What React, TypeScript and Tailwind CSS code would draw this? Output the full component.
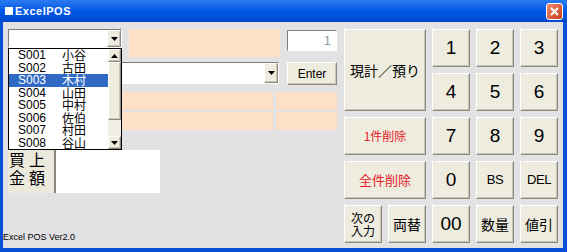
const btn =
  "flex items-center justify-center bg-[#eeecdf] border border-t-white border-l-white border-b-[#8c8a7e] border-r-[#8c8a7e] shadow-[inset_-1px_-1px_0_#c8c5b4]";

const jp = { fontFamily: '"Noto Sans CJK JP", "Liberation Sans", sans-serif' };
const sans = { fontFamily: '"Liberation Sans", "Noto Sans CJK JP", sans-serif' };

const ITEMS = [
  ["S001", "小谷"],
  ["S002", "古田"],
  ["S003", "木村"],
  ["S004", "山田"],
  ["S005", "中村"],
  ["S006", "佐伯"],
  ["S007", "村田"],
  ["S008", "谷山"],
];

function Arrow({ up = false }: { up?: boolean }) {
  return (
    <svg width="7" height="4" viewBox="0 0 7 4">
      <path d={up ? "M0 4 L3.5 0 L7 4 Z" : "M0 0 L7 0 L3.5 4 Z"} fill="#000" />
    </svg>
  );
}

function Combo({ className }: { className: string }) {
  return (
    <div
      className={`flex bg-white border border-t-[#7f7d72] border-l-[#7f7d72] border-b-white border-r-white ${className}`}
    >
      <div className="flex-1" />
      <div className={`${btn} w-[14px] border-t-[#f4f3ee] border-l-[#f4f3ee]`}>
        <Arrow />
      </div>
    </div>
  );
}

export default function App() {
  return (
    <div className="flex h-[252px] w-[567px] flex-col bg-[#0a4fd8]" style={sans}>
      {/* title bar */}
      <div className="flex h-[22px] items-center bg-gradient-to-b from-[#2a7af0] via-[#0058e6] to-[#0048d0] pl-[5px] pr-[4px]">
        <div className="h-[8px] w-[8px] bg-white" />
        <span className="ml-[2px] text-[11px] font-bold tracking-[0.5px] text-white">ExcelPOS</span>
        <div className="ml-auto flex h-[17px] w-[17px] items-center justify-center rounded-[3px] border border-white bg-gradient-to-br from-[#f08a6a] to-[#c83a14]">
          <svg width="9" height="9" viewBox="0 0 9 9">
            <path d="M1 1 L8 8 M8 1 L1 8" stroke="#fff" strokeWidth="2" />
          </svg>
        </div>
      </div>

      {/* client */}
      <div className="ml-[3px] mr-[4px] mb-[4px] flex flex-1 gap-[6px] bg-[#e2e1e4] pl-[5px] pt-[7px]">
        {/* left */}
        <div className="relative flex h-[214px] w-[330px] flex-col">
          <div className="flex h-[28px] items-start">
            <Combo className="h-[19px] w-[114px]" />
            <div className="ml-[7px] h-[28px] w-[151px] bg-[#fde0c6]" />
            <div className="ml-[7px] mt-[1px] flex h-[21px] w-[50px] items-center justify-end border border-t-[#808080] border-l-[#808080] border-b-white border-r-white bg-white pr-[5px] text-[13px] text-[#9a9a9a]">
              1
            </div>
          </div>
          <div className="mt-[5px] flex h-[23px] items-start">
            <Combo className="h-[22px] w-[271px]" />
            <div className={`${btn} ml-[8px] h-[23px] w-[50px] text-[12px] text-black`}>Enter</div>
          </div>
          <div className="mt-[7px] flex flex-col gap-[2px]">
            {[0, 1].map((r) => (
              <div key={r} className="flex h-[18px] gap-[3px]">
                <div className="w-[265px] bg-[#fde0c6]" />
                <div className="w-[61px] bg-[#fde0c6]" />
              </div>
            ))}
          </div>
          <div className="mt-[20px] flex h-[43px]">
            <div
              className="flex w-[45px] flex-col items-start bg-[#ebe9dc] pl-[1px] text-[16px] leading-[18px] tracking-[4px] text-black"
              style={jp}
            >
              <span>買上</span>
              <span>金額</span>
            </div>
            <div className="ml-[1px] w-[106px] border-l-2 border-l-[#8a887c] bg-white" />
          </div>
          <div className="-ml-[5px] mt-auto text-[9px] leading-[11px] text-black">Excel POS Ver2.0</div>

          {/* dropdown list */}
          <div className="absolute left-0 top-[19px] flex h-[102px] w-[114px] border border-black bg-white">
            <div className="flex flex-1 flex-col overflow-hidden">
              {ITEMS.map(([code, name], i) => (
                <div
                  key={code}
                  className={`flex h-[12.5px] shrink-0 items-center text-[12px] leading-[12px] ${
                    i === 2 ? "bg-[#316ac5] text-white" : "text-black"
                  }`}
                >
                  <span className="w-[53px] pl-[9px]">{code}</span>
                  <span className="text-[12px] leading-[12px]" style={jp}>
                    {name}
                  </span>
                </div>
              ))}
            </div>
            <div className="flex w-[13px] flex-col bg-[#f1efe4]">
              <div className={`${btn} h-[13px] w-full`}>
                <Arrow up />
              </div>
              <div className={`${btn} h-[58px] w-full`} />
              <div className="flex-1" />
              <div className={`${btn} h-[13px] w-full`}>
                <Arrow />
              </div>
            </div>
          </div>
        </div>

        {/* keypad */}
        <div
          className="grid grid-cols-[repeat(5,38px)] grid-rows-[repeat(5,38px)] gap-[6px] text-black"
          style={jp}
        >
          <div className={`${btn} col-span-2 row-span-2 text-[14px]`}>現計／預り</div>
          <div className={`${btn} text-[19px]`} style={sans}>1</div>
          <div className={`${btn} text-[19px]`} style={sans}>2</div>
          <div className={`${btn} text-[19px]`} style={sans}>3</div>
          <div className={`${btn} text-[19px]`} style={sans}>4</div>
          <div className={`${btn} text-[19px]`} style={sans}>5</div>
          <div className={`${btn} text-[19px]`} style={sans}>6</div>
          <div className={`${btn} col-span-2 text-[12px] text-[#e8202a]`}>1件削除</div>
          <div className={`${btn} text-[19px]`} style={sans}>7</div>
          <div className={`${btn} text-[19px]`} style={sans}>8</div>
          <div className={`${btn} text-[19px]`} style={sans}>9</div>
          <div className={`${btn} col-span-2 text-[13px] text-[#e8202a]`}>全件削除</div>
          <div className={`${btn} text-[19px]`} style={sans}>0</div>
          <div className={`${btn} text-[13px] tracking-[-0.5px]`} style={sans}>BS</div>
          <div className={`${btn} text-[13px] tracking-[-0.5px]`} style={sans}>DEL</div>
          <div className={`${btn} flex-col text-[12px] leading-[13px]`}>
            <span>次の</span>
            <span>入力</span>
          </div>
          <div className={`${btn} text-[14px]`}>両替</div>
          <div className={`${btn} text-[19px]`} style={sans}>00</div>
          <div className={`${btn} text-[14px]`}>数量</div>
          <div className={`${btn} text-[14px]`}>値引</div>
        </div>
      </div>
    </div>
  );
}
